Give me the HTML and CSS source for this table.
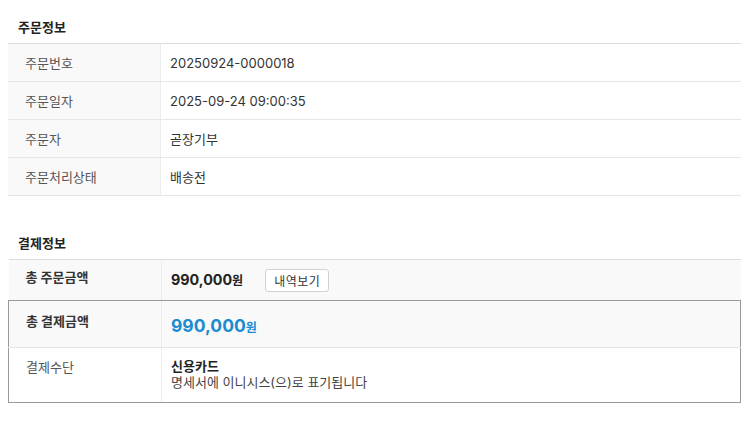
FILE: index.html
```html
<!DOCTYPE html>
<html lang="ko">
<head>
<meta charset="utf-8">
<title>주문정보</title>
<link rel="stylesheet" href="styles.css">
</head>
<body>
<section class="sec">
  <h2 class="sec-title">주문정보</h2>
  <table class="info">
    <tbody>
      <tr><th>주문번호</th><td>20250924-0000018</td></tr>
      <tr><th>주문일자</th><td>2025-09-24 09:00:35</td></tr>
      <tr><th>주문자</th><td>곧장기부</td></tr>
      <tr><th>주문처리상태</th><td>배송전</td></tr>
    </tbody>
  </table>
</section>
<section class="sec sec-pay">
  <h2 class="sec-title">결제정보</h2>
  <table class="info pay">
    <tbody>
      <tr class="r-order">
        <th class="strong">총 주문금액</th>
        <td><span class="amt">990,000<span class="won">원</span></span><button class="btn" type="button">내역보기</button></td>
      </tr>
      <tr class="r-total">
        <th class="strong">총 결제금액</th>
        <td><span class="amt-blue">990,000<span class="won">원</span></span></td>
      </tr>
      <tr class="r-method">
        <th>결제수단</th>
        <td><strong class="method">신용카드</strong><span class="note">명세서에 이니시스(으)로 표기됩니다</span></td>
      </tr>
    </tbody>
  </table>
</section>
</body>
</html>
```
FILE: styles.css
```css
html, body { background: #fff; }
body {
  margin: 8px;
  font-family: Inter, "Noto Sans CJK KR", sans-serif;
  color: #333;
  font-size: 13px;
}
.sec-title {
  font-size: 13px;
  font-weight: 700;
  color: #222;
  line-height: 18px;
  margin: 10px 0 7px 10px;
}
.sec-pay .sec-title { margin: 38px 0 7px 10px; }
.info {
  width: 733px;
  border-collapse: collapse;
  border-top: 1px solid #dcdcdc;
}
.info th, .info td {
  border-bottom: 1px solid #e6e6e6;
  height: 37px;
  padding: 0;
  text-align: left;
  vertical-align: middle;
  line-height: 18px;
}
.info th {
  width: 135px;
  padding-left: 17px;
  font-weight: 400;
  color: #555;
  background: #faf9f9;
  border-right: 1px solid #ececec;
}
.info td {
  padding-left: 9px;
  color: #333;
}
.pay th, .pay td { vertical-align: top; }
.pay th.strong { font-weight: 700; color: #333; }
.r-order th, .r-order td { height: 31px; padding-top: 9px; background: #faf9f9; border-bottom: 1px solid #999; }
.r-order th { height: 32px; padding-top: 8px; }
.r-total th, .r-total td { background: #faf9f9; }
.r-total th { height: 35px; padding-top: 11px; }
.r-total td { height: 33px; padding-top: 13px; }
.r-total th, .r-method th { border-left: 1px solid #999; }
.r-total td, .r-method td { border-right: 1px solid #999; }
.r-method th, .r-method td { height: 44px; padding-top: 10px; border-bottom: 1px solid #999; background: #fff; }
.r-method th { background: #fff; }
.amt {
  font-size: 14.3px;
  font-weight: 700;
  color: #222;
  line-height: 20px;
  vertical-align: middle;
}
.amt .won { font-size: 12px; }
.btn {
  margin-left: 22px;
  height: 23px;
  padding: 0 8px;
  border: 1px solid #d2d2d2;
  border-radius: 3px;
  background: #fff;
  font-family: inherit;
  font-size: 12px;
  letter-spacing: 0.5px;
  color: #333;
  vertical-align: middle;
}
.amt-blue {
  font-size: 17.5px;
  font-weight: 700;
  color: #1a8ccf;
  line-height: 24px;
}
.amt-blue .won { font-size: 12px; }
.method { display: block; font-weight: 700; color: #222; line-height: 16px; }
.note { display: block; color: #444; line-height: 16px; }
```
